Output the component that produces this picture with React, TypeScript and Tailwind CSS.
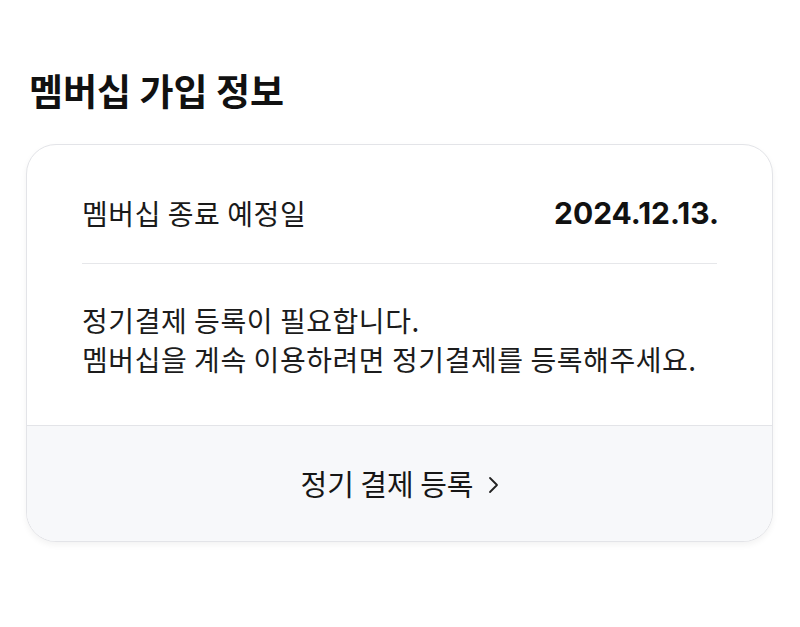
import React from "react";

export default function App() {
  return (
    <div
      className="min-h-[627px] w-[800px] bg-white pl-[26px] pr-[27px] pt-[68px] text-[#161616]"
      style={{ fontFamily: '"Noto Sans CJK KR", "Noto Sans", sans-serif' }}
    >
      <h1 className="ml-[3px] text-[37px] font-bold leading-[44px] tracking-[0em] text-[#111]">
        멤버십 가입 정보
      </h1>
      <div className="mt-[32px] overflow-hidden rounded-[30px] border-[1.5px] border-[#e3e4e8] bg-white shadow-[0_3px_6px_rgba(0,0,0,0.05)]">
        <div className="px-[55px] pt-[48px] pb-[46px]">
          <div className="flex h-[40px] items-center justify-between">
            <span className="text-[28px] tracking-[0.02em] text-[#1a1a1a]">멤버십 종료 예정일</span>
            <span className="mr-[-2px] font-['Inter'] text-[30px] font-bold tracking-[0em] text-[#111]">
              2024.12.13.
            </span>
          </div>
          <div className="mt-[30px] h-px bg-[#e6e7ea]" />
          <p className="mt-[37px] text-[28px] leading-[39px] tracking-[0.02em] text-[#1c1c1c]">
            정기결제 등록이 필요합니다.
            <br />
            멤버십을 계속 이용하려면 정기결제를 등록해주세요.
          </p>
        </div>
        <div className="flex h-[116px] items-center justify-center border-t-[1.5px] border-[#e3e4e8] bg-[#f7f8fa]">
          <span className="text-[29px] tracking-[0em] text-[#161616]">정기 결제 등록</span>
          <svg className="ml-[14px] mt-[2px]" width="11" height="18" viewBox="0 0 11 18" fill="none">
            <path d="M2 2l7 7-7 7" stroke="#222" strokeWidth="1.8" strokeLinecap="round" strokeLinejoin="round" />
          </svg>
        </div>
      </div>
    </div>
  );
}
